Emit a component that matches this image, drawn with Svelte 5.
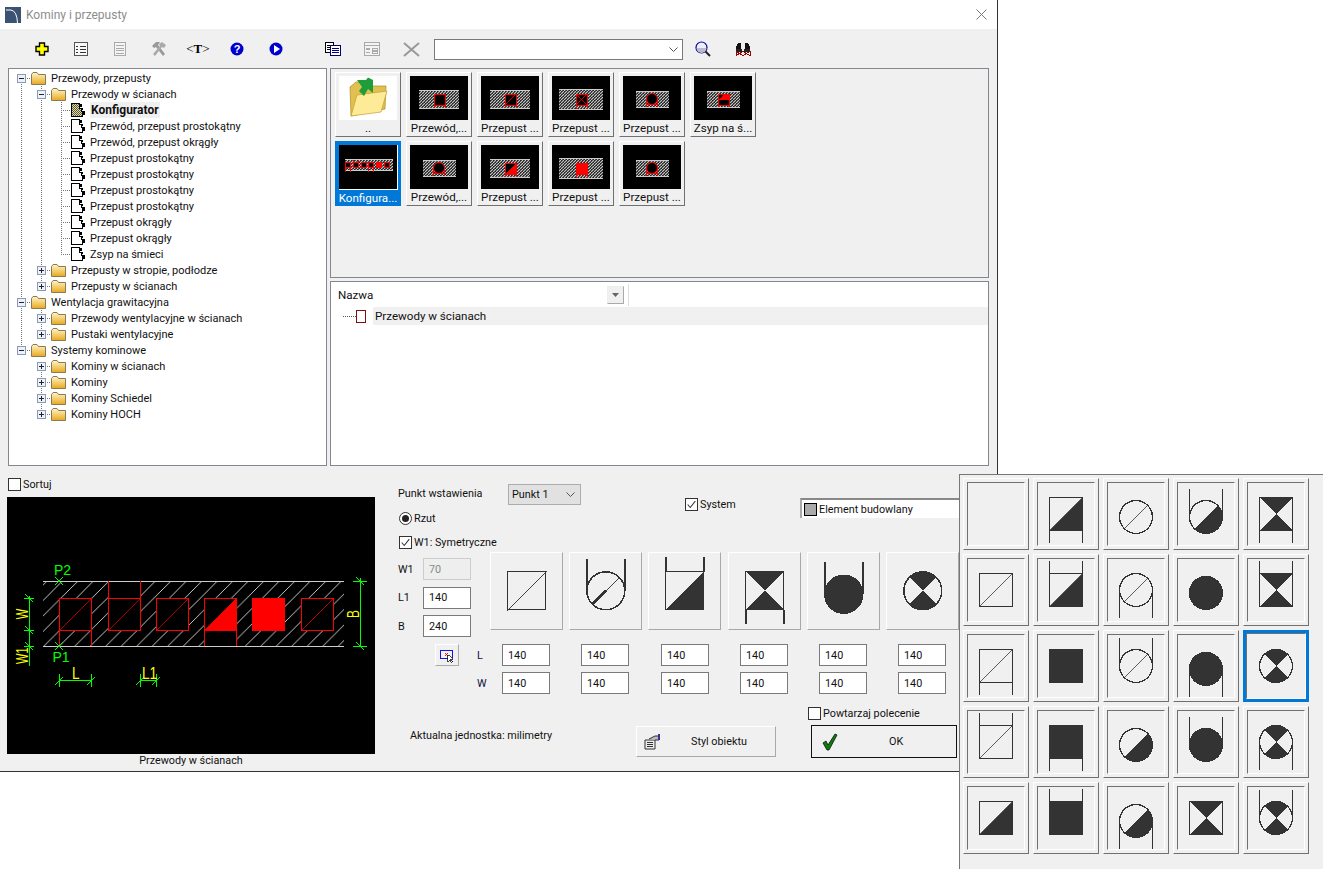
<script>
  const D = 'd', U = 'u', N = '';
  const tree = [
    { t: 'Przewody, przepusty', c: [{ u: 0, d: 1, r: 1, e: '-' }], i: 'f' },
    { t: 'Przewody w ścianach', c: [{ u: 1, d: 1 }, { u: 1, d: 1, r: 1, e: '-' }], i: 'f' },
    { t: 'Konfigurator', c: [{ u: 1, d: 1 }, { u: 1, d: 1 }, { u: 1, d: 1, r: 1 }], i: 'k', b: 1 },
    ...['Przewód, przepust prostokątny', 'Przewód, przepust okrągły', 'Przepust prostokątny', 'Przepust prostokątny', 'Przepust prostokątny', 'Przepust prostokątny', 'Przepust okrągły', 'Przepust okrągły'].map((t) => ({
      t, c: [{ u: 1, d: 1 }, { u: 1, d: 1 }, { u: 1, d: 1, r: 1 }], i: 'l'
    })),
    { t: 'Zsyp na śmieci', c: [{ u: 1, d: 1 }, { u: 1, d: 1 }, { u: 1, d: 0, r: 1 }], i: 'l' },
    { t: 'Przepusty w stropie, podłodze', c: [{ u: 1, d: 1 }, { u: 1, d: 1, r: 1, e: '+' }], i: 'f' },
    { t: 'Przepusty w ścianach', c: [{ u: 1, d: 1 }, { u: 1, d: 0, r: 1, e: '+' }], i: 'f' },
    { t: 'Wentylacja grawitacyjna', c: [{ u: 1, d: 1, r: 1, e: '-' }], i: 'f' },
    { t: 'Przewody wentylacyjne w ścianach', c: [{ u: 1, d: 1 }, { u: 1, d: 1, r: 1, e: '+' }], i: 'f' },
    { t: 'Pustaki wentylacyjne', c: [{ u: 1, d: 1 }, { u: 1, d: 0, r: 1, e: '+' }], i: 'f' },
    { t: 'Systemy kominowe', c: [{ u: 1, d: 0, r: 1, e: '-' }], i: 'f' },
    { t: 'Kominy w ścianach', c: [{}, { u: 0, d: 1, r: 1, e: '+' }], i: 'f' },
    { t: 'Kominy', c: [{}, { u: 1, d: 1, r: 1, e: '+' }], i: 'f' },
    { t: 'Kominy Schiedel', c: [{}, { u: 1, d: 1, r: 1, e: '+' }], i: 'f' },
    { t: 'Kominy HOCH', c: [{}, { u: 1, d: 0, r: 1, e: '+' }], i: 'f' }
  ];

  const wideH = { hx: 8.7, hy: 14.3, hw: 40, hh: 18 };
  const bigH = { hx: 6.7, hy: 13.3, hw: 44, hh: 20 };
  const smallH = { hx: 12.7, hy: 15, hw: 33, hh: 16 };
  const thumbs = [
    { label: '..', folder: true },
    { label: 'Przewód,...', ...wideH, k: 'sq' },
    { label: 'Przepust ...', ...wideH, k: 'tri' },
    { label: 'Przepust ...', ...bigH, k: 'x' },
    { label: 'Przepust ...', ...smallH, k: 'circ' },
    { label: 'Zsyp na ś...', ...smallH, k: 'half' },
    { label: 'Konfigura...', hx: 5.7, hy: 14.7, hw: 48, hh: 11, k: 'multi', sel: true },
    { label: 'Przewód,...', ...smallH, k: 'circ' },
    { label: 'Przepust ...', ...wideH, k: 'tri2' },
    { label: 'Przepust ...', ...bigH, k: 'fill' },
    { label: 'Przepust ...', ...smallH, k: 'circ' }
  ];

  const S = 's', C = 'c';
  const popup = [
    null, [S, 'half', D, 0], [C, 'diag', N, 3], [C, 'half', U, 3], [S, 'hour', D, 0],
    [S, 'diag', N, 0], [S, 'half', U, 0], [C, 'diag', D, 0], [C, 'full', N, 3], [S, 'hour', U, 0],
    [S, 'diag', D, 0], [S, 'full', N, 0], [C, 'diag', U, 0], [C, 'full', D, 3], [C, 'x', N, 0],
    [S, 'diag', U, 0], [S, 'full', D, 0], [C, 'half', N, 3], [C, 'full', U, 3], [C, 'x', D, 0],
    [S, 'half', N, 0], [S, 'full', U, 0], [C, 'half', D, 3], [S, 'hour', N, 0], [C, 'x', U, 0]
  ];
  const mainSyms = [
    [S, 'diag', N, 0], [C, 'diagB', U, 0], [S, 'half', U, 0], [S, 'hour', D, 0], [C, 'full', U, 3], [C, 'x', N, 0]
  ];
  const values = [140, 140, 140, 140, 140, 140];
  const redSquares = [52.3, 101.3, 149.3, 197.3, 245.3, 294.3];
</script>

{#snippet symbol(s)}
  <svg class="sym" viewBox="-32 -32 64 64" shape-rendering="crispEdges">
    {#if s}
      <g transform={`translate(0 ${s[3]})`} fill="#333" stroke="#333">
        {#if s[0] === 's'}
          {#if s[1] === 'half'}<polygon points="17,-17 17,17 -17,17" stroke="none" />{/if}
          {#if s[1] === 'hour'}<polygon points="-17,-17 17,-17 0,0" stroke="none" /><polygon points="-17,17 17,17 0,0" stroke="none" />{/if}
          {#if s[1] === 'full'}<rect x="-17" y="-17" width="34" height="34" stroke="none" />{/if}
          {#if s[1] === 'diag' || s[1] === 'half'}<line x1="-17" y1="17" x2="17" y2="-17" stroke-width="0.8" />{/if}
          <rect class="o" x="-16.5" y="-16.5" width="33" height="33" fill="none" />
          {#if s[2] === 'd'}<path class="leg" d="M-16.5 17V29M16.5 17V29" fill="none" />{/if}
          {#if s[2] === 'u'}<path class="leg" d="M-16.5 -17V-29M16.5 -17V-29" fill="none" />{/if}
        {:else}
          {#if s[1] === 'full'}<circle r="17" stroke="none" />{/if}
          {#if s[1] === 'half'}<path d="M12 -12A17 17 0 0 1 -12 12Z" stroke="none" />{/if}
          {#if s[1] === 'x'}<path d="M-12 -12A17 17 0 0 1 12 -12L0 0ZM12 12A17 17 0 0 1 -12 12L0 0Z" stroke="none" />{/if}
          {#if s[1] === 'diag'}<line x1="-12" y1="12" x2="12" y2="-12" stroke-width="0.8" />{/if}
          {#if s[1] === 'diagB'}<line x1="-12" y1="12" x2="12" y2="-12" stroke-width="0.8" /><line x1="-12" y1="12" x2="0" y2="0" stroke-width="2.2" />{/if}
          <circle r="16.5" fill="none" stroke-width="1.3" />
          {#if s[2] === 'd'}<path class="leg" d="M-16.5 0V28M16.5 0V28" fill="none" />{/if}
          {#if s[2] === 'u'}<path class="leg" d="M-16.5 0V-28M16.5 0V-28" fill="none" />{/if}
        {/if}
      </g>
    {/if}
  </svg>
{/snippet}

{#snippet thumb(t)}
  {#if t.folder}
    <svg class="timg" viewBox="0 0 58 44">
      <rect width="58" height="44" fill="#fff" />
      <path d="M11 11L17 6H30L33 10H47L46 33L12 40Z" fill="#e0c050" stroke="#b08a20" stroke-width="0.7" />
      <path d="M12 40L18 19L48 15L42 36Z" fill="#fdeb98" stroke="#c79d2b" stroke-width="0.7" />
      <path d="M18 4H27L29 1.500L34 4V17L29 13L25 20L20 15L23 11Z" fill="#1f9d3a" />
    </svg>
  {:else}
    <svg class="timg" viewBox="0 0 58 44" shape-rendering="crispEdges">
      <rect width="58" height="44" fill="#000" />
      <rect x={t.hx} y={t.hy} width={t.hw} height={t.hh} fill="url(#tinyhatch)" />
      <path d={`M${t.hx} ${t.hy}h${t.hw}M${t.hx} ${t.hy + t.hh}h${t.hw}`} stroke="#ccc" stroke-width="1" />
      <g fill="#000" stroke="#f00" stroke-width="1">
        {#if t.k === 'multi'}
          {#each [6, 14, 22, 29, 37, 45] as x, i}
            <rect {x} y="17.5" width="5" height="5" fill={i === 4 ? '#f00' : '#000'} />
          {/each}
          <path d="M14 14.500V22M19 14.500V22M29 22V27M34 22V27M6 22V27M11 22V27" fill="none" />
        {:else if t.k === 'circ'}
          <circle cx="29" cy="23" r="5.5" fill="#000" shape-rendering="geometricPrecision" />
          <path d="M23.500 23V31M34.500 23V31M23.500 28H34.500" fill="none" />
        {:else}
          <rect x="24" y="18" width="11" height="11" fill={t.k === 'fill' ? '#f00' : '#000'} />
          {#if t.k === 'tri'}<path d="M24 29L35 18" fill="none" stroke-width="0.8" />{/if}
          {#if t.k === 'tri2'}<polygon points="35,18 35,29 24,29" fill="#f00" stroke="none" />{/if}
          {#if t.k === 'half'}<polygon points="24,24 30,18 35,18 35,24" fill="#f00" stroke="none" />{/if}
          {#if t.k === 'x'}<path d="M24 18L35 29M35 18L24 29" fill="none" stroke-width="0.8" />{/if}
          <path d={`M24 29V${t.hy + t.hh}M35 29V${t.hy + t.hh}`} fill="none" />
        {/if}
      </g>
    </svg>
  {/if}
{/snippet}

{#snippet check(on)}
  <span class="cb">
    {#if on}
      <svg viewBox="0 0 13 13"><path d="M2 6.500L5 10L11 2.500" fill="none" stroke="#333" stroke-width="1.2" /></svg>
    {/if}
  </span>
{/snippet}

<div class="page">
  <svg width="0" height="0" class="defs">
    <defs>
      <pattern id="tinyhatch" width="3" height="3" patternUnits="userSpaceOnUse">
        <rect width="3" height="3" fill="#222" />
        <path d="M0 3L3 0" stroke="#ccc" stroke-width="1.1" />
      </pattern>
      <pattern id="cadhatch" width="15.5" height="15.5" patternUnits="userSpaceOnUse">
        <path d="M0 15.5L15.5 0" stroke="#ddd" stroke-width="0.9" fill="none" />
      </pattern>
      <pattern id="checker" width="2" height="2" patternUnits="userSpaceOnUse">
        <rect width="2" height="2" fill="#e8dc8c" />
        <rect width="1" height="1" fill="#555" />
        <rect x="1" y="1" width="1" height="1" fill="#555" />
      </pattern>
      <linearGradient id="fold" x1="0" y1="0" x2="0" y2="1">
        <stop offset="0" stop-color="#fff6c8" />
        <stop offset="1" stop-color="#e8a820" />
      </linearGradient>
    </defs>
  </svg>

  <div class="window">
    <header class="title">
      <svg class="appicon" viewBox="0 0 16 16"><rect width="16" height="16" fill="#3b5272" /><path d="M1 3H6Q12 4 12.500 16" fill="none" stroke="#fff" stroke-width="1" /></svg>
      <span>Kominy i przepusty</span>
      <svg class="close" viewBox="0 0 11 11"><path d="M0.500 0.500L10.500 10.500M10.500 0.500L0.500 10.500" stroke="#777" stroke-width="1" fill="none" /></svg>
    </header>

    <div class="toolbar">
      <div class="tb">
        <svg viewBox="0 0 14 14" class="ti"><path d="M4.500 1H9.500V4.500H13V9.500H9.500V13H4.500V9.500H1V4.500H4.500Z" fill="#ff0" stroke="#000" stroke-width="1.4" /></svg>
      </div>
      <div class="tb">
        <svg viewBox="0 0 14 14" class="ti" shape-rendering="crispEdges"><rect x="0.500" y="0.500" width="13" height="13" fill="#f8f8f8" stroke="#555" /><path d="M2 4H4M6 4H12M2 7H4M6 7H12M2 10H4M6 10H12" stroke="#333" /></svg>
      </div>
      <div class="tb">
        <svg viewBox="0 0 14 14" class="ti" shape-rendering="crispEdges"><rect x="1.500" y="0.500" width="11" height="13" fill="#f4f4f4" stroke="#aaa" /><path d="M3 3.500H11M3 6H11M3 8.500H11M3 11H11" stroke="#aaa" /></svg>
      </div>
      <div class="tb">
        <svg viewBox="0 0 16 16" class="ti wide"><path d="M1 5L5 1H9L7 4L14 13L12 15L5 6L3 7Z" fill="#999" /><path d="M2 13L9 5L8 3L11 1L15 4L13 7L11 6L4 15Z" fill="#aaa" /></svg>
      </div>
      <div class="tb"><span class="ttag">&lt;<b>T</b>&gt;</span></div>
      <div class="tb">
        <svg viewBox="0 0 14 14" class="ti"><circle cx="7" cy="7" r="6.500" fill="#00c" /><text x="7" y="11" text-anchor="middle" class="qm">?</text></svg>
      </div>
      <div class="tb">
        <svg viewBox="0 0 14 14" class="ti"><circle cx="7" cy="7" r="6.500" fill="#00c" /><path d="M5 3L11 7L5 11Z" fill="#fff" /></svg>
      </div>
      <div class="tb t8">
        <svg viewBox="0 0 16 14" class="ti wide" shape-rendering="crispEdges"><rect x="0.500" y="0.500" width="8" height="10" fill="#fff" stroke="#000" /><path d="M2 3H7M2 5H7M2 7H7" stroke="#000" /><rect x="5.500" y="3.500" width="10" height="10" fill="#fff" stroke="#007" /><path d="M7 6H14M7 8H14M7 10H14" stroke="#007" /></svg>
      </div>
      <div class="tb">
        <svg viewBox="0 0 15 14" class="ti wide" shape-rendering="crispEdges"><rect x="0.500" y="0.500" width="14" height="13" fill="#f4f4f4" stroke="#aaa" /><path d="M1 4H14M2 7H6M2 10H6M8 6.500H13V8.500H8ZM8 9.500H13V11.500H8Z" stroke="#aaa" fill="none" /></svg>
      </div>
      <div class="tb">
        <svg viewBox="0 0 17 15" class="ti wider"><path d="M1 1L16 14M16 1L1 14" stroke="#999" stroke-width="2" /></svg>
      </div>
      <div class="combo">
        <svg viewBox="0 0 9 5" class="chev"><path d="M0.500 0.500L4.500 4.500L8.500 0.500" fill="none" stroke="#555" /></svg>
      </div>
      <div class="tb t11">
        <svg viewBox="0 0 16 16" class="ti wide"><circle cx="6.500" cy="6.500" r="5.500" fill="#eef" stroke="#009" stroke-width="1.2" /><path d="M1.500 7A5 5 0 0 0 11.500 7Z" fill="#bbc" /><path d="M10.500 10.500L15 15" stroke="#222" stroke-width="2" /></svg>
      </div>
      <div class="tb t12">
        <svg viewBox="0 0 16 15" class="ti wide" shape-rendering="crispEdges"><path d="M3 1H6V7H1V6ZM10 1H13L15 6V7H10Z" fill="#111" /><path d="M1 7H7V9H9V7H15V10H9V9H7V10H1Z" fill="#222" /><path d="M1 14L8 10L15 14V10L8 14L1 10Z" fill="none" stroke="#900" /></svg>
      </div>
    </div>

    <div class="mainrow">
      <div class="tree">
        {#each tree as row}
          <div class="trow">
            {#each row.c as c}
              <svg class="cell" viewBox="0 0 20 16" shape-rendering="crispEdges">
                <g stroke="#777" stroke-dasharray="1 1" fill="none">
                  {#if c.u}<path d="M10 0V8" />{/if}
                  {#if c.d}<path d="M10 8V16" />{/if}
                  {#if c.r}<path d="M10 8.500H20" />{/if}
                </g>
                {#if c.e}
                  <rect x="6.500" y="4.500" width="8" height="8" fill="#eef1f6" stroke="#8a9ab5" />
                  <path d={c.e === '-' ? 'M8 8.500H13' : 'M8 8.500H13M10.500 6V11'} stroke="#223" />
                {/if}
              </svg>
            {/each}
            {#if row.i === 'f'}
              <svg class="ticon" viewBox="0 0 15 13"><path d="M0.500 2.500L2 0.500H6L7.500 2.500H14.500V12.500H0.500Z" fill="url(#fold)" stroke="#8a7a50" /></svg>
            {:else}
              <svg class="ticon leaf" viewBox="0 0 14 14" shape-rendering="crispEdges">
                <path d="M0.500 0.500H8.500V5H10V8H11.500V13.500H0.500Z" fill={row.i === 'k' ? 'url(#checker)' : '#fff'} stroke="#000" />
                <path d="M9 1H11V4H9ZM10 5H12V7H10ZM12 8H14V12H12Z" fill="#000" />
              </svg>
            {/if}
            <span class="tlabel" class:bold={row.b}>{row.t}</span>
          </div>
        {/each}
      </div>

      <div class="rightcol">
        <div class="thumbs">
          {#each thumbs as t}
            <div class="thumb" class:sel={t.sel}>
              {@render thumb(t)}
              <span class="tcap">{t.label}</span>
            </div>
          {/each}
        </div>
        <div class="list">
          <div class="lhead">
            <span class="lname">Nazwa</span>
            <span class="ldrop"><svg viewBox="0 0 7 4"><path d="M0 0H7L3.500 4Z" fill="#666" /></svg></span>
            <span class="lsep"></span>
          </div>
          <div class="lrow">
            <span class="ldots"></span>
            <span class="lmark"></span>
            <span class="lsel">Przewody w ścianach</span>
          </div>
        </div>
      </div>
    </div>

    <div class="bottom">
      <div class="bleft">
        <label class="chk sort">{@render check(false)}<span>Sortuj</span></label>
        <svg class="cad" viewBox="0 0 368 257" shape-rendering="crispEdges">
          <rect width="368" height="257" fill="#000" />
          <rect x="36" y="84.300" width="301" height="65" fill="url(#cadhatch)" />
          <rect x="101.300" y="84.300" width="32" height="17" fill="#000" />
          <rect x="197.300" y="133.300" width="32" height="16" fill="#000" />
          <path d="M36 84.300H337M36 149.300H337" stroke="#ccc" stroke-width="1" />
          {#each redSquares as x, i}
            <rect {x} y="101.300" width="32" height="32" fill={i === 4 ? '#f00' : '#000'} stroke="#f00" stroke-width="1" />
            {#if i !== 4}<line x1={x} y1="133.300" x2={x + 32} y2="101.300" stroke="#f00" stroke-width="0.7" />{/if}
          {/each}
          <polygon points="229.300,101.300 229.300,133.300 197.300,133.300" fill="#f00" />
          <path d="M52.300 133V149.300M84.300 133V149.300M101.300 84.300V101.300M133.300 84.300V101.300M197.300 133V149.300M229.300 133V149.300" stroke="#f00" stroke-width="1" fill="none" />
          <g stroke="#0f0" stroke-width="1" fill="none">
            <path d="M22.300 99V168.700" />
            <path d="M17.300 101.300H27.300M17.300 133.300H27.300M17.300 149.300H27.300M18 97.300L26 105.300M18 129.300L26 137.300M18 145.300L26 153.300" />
            <path d="M353 81V150" />
            <path d="M346 84.300H360M346 149.300H360M349 80.300L357 88.300M349 145.300L357 153.300" />
            <path d="M52.300 183.700H84.300M52.300 177V190M84.300 177V190M48.300 187.700L56.300 179.700M80.300 187.700L88.300 179.700" />
            <path d="M133.300 183.700H149.300M133.300 177V190M149.300 177V190M129.300 187.700L137.300 179.700M145.300 187.700L153.300 179.700" />
            <path d="M48 80.300L56 88.300M56 80.300L48 88.300M48 145.300L56 153.300M56 145.300L48 153.300" />
          </g>
          <text x="47" y="78" class="cadt green">P2</text>
          <text x="45.500" y="165" class="cadt green">P1</text>
          <text transform="translate(65 182) scale(0.8 1)" class="cadt tall yellow">L</text>
          <text transform="translate(135 182) scale(0.8 1)" class="cadt tall yellow">L1</text>
          <text transform="translate(21.300 117) rotate(-90) scale(0.65 1)" text-anchor="middle" class="cadt tall yellow">W</text>
          <text transform="translate(21.300 158.700) rotate(-90) scale(0.65 1)" text-anchor="middle" class="cadt tall yellow">W1</text>
          <text transform="translate(352 117) rotate(-90) scale(0.7 1)" text-anchor="middle" class="cadt tall yellow">B</text>
        </svg>
        <div class="caption">Przewody w ścianach</div>
      </div>

      <div class="form">
        <div class="frow a">
          <span class="pw">Punkt wstawienia</span>
          <div class="sel1"><span>Punkt 1</span><svg viewBox="0 0 9 5" class="chev"><path d="M0.500 0.500L4.500 4.500L8.500 0.500" fill="none" stroke="#555" /></svg></div>
          <label class="chk sys">{@render check(true)}<span>System</span></label>
          <div class="elem"><span class="swatch"></span><span>Element budowlany</span></div>
        </div>
        <div class="frow b">
          <span class="radio"><span class="dot"></span></span><span>Rzut</span>
        </div>
        <label class="chk c">{@render check(true)}<span>W1: Symetryczne</span></label>
        <div class="frow d">
          <div class="params">
            <div class="prow"><span class="plabel">W1</span><input class="inp dis" value="70" readonly /></div>
            <div class="prow"><span class="plabel">L1</span><input class="inp" value="140" readonly /></div>
            <div class="prow"><span class="plabel">B</span><input class="inp" value="240" readonly /></div>
          </div>
          <div class="symrow">
            {#each mainSyms as s}
              <div class="mtile">{@render symbol(s)}</div>
            {/each}
          </div>
        </div>
        <div class="frow e">
          <div class="pick">
            <svg viewBox="0 0 24 21" shape-rendering="crispEdges"><rect x="4.500" y="5.500" width="13" height="9" fill="none" stroke="#00d" /><path d="M9 8L13 12M13 8L9 12" stroke="#d00" /><path d="M13 10L13 18L15 16L17 19L18 18L16 15L19 15Z" fill="#fff" stroke="#000" stroke-width="0.8" /></svg>
          </div>
          <div class="dims">
            <div class="drow">
              <span class="dl">L</span>
              {#each values as v}<input class="inp" value={v} readonly />{/each}
            </div>
            <div class="drow">
              <span class="dl">W</span>
              {#each values as v}<input class="inp" value={v} readonly />{/each}
            </div>
          </div>
        </div>
        <label class="chk rep">{@render check(false)}<span>Powtarzaj polecenie</span></label>
        <div class="frow g">
          <span class="unit">Aktualna jednostka: milimetry</span>
          <button class="styl">
            <svg viewBox="0 0 16 16" class="bico"><path d="M1 6H11V15H1Z" fill="#eee" stroke="#333" /><path d="M3 8.500H9M3 10.500H9M3 12.500H9" stroke="#333" /><path d="M5 5L11 2L15 2V6H11" fill="#bbb" stroke="#333" /><rect x="14" y="0" width="2" height="6" fill="#339" /></svg>
            <span>Styl obiektu</span>
          </button>
          <button class="ok">
            <svg viewBox="0 0 16 18" class="okico"><path d="M1 10L4 8L6 12L13 1L15 2L7 17H5Z" fill="#0a7d0a" stroke="#111" stroke-width="0.8" /></svg>
            <span>OK</span>
          </button>
        </div>
      </div>
    </div>
  </div>

  <div class="popup">
    {#each popup as s, i}
      <div class="ptile" class:psel={i === 14}>
        <div class="pin">{@render symbol(s)}</div>
      </div>
    {/each}
  </div>
</div>

<style>
  :global(body) {
    margin: 0;
    background: #fff;
    overflow: hidden;
  }
  .page {
    position: relative;
    width: 1323px;
    height: 869px;
    font-family: Roboto, sans-serif;
    font-size: 11px;
    color: #111;
    overflow: hidden;
  }
  .defs { position: absolute; }
  .window {
    width: 997px;
    height: 771px;
    display: flex;
    flex-direction: column;
    background: #f0f0f0;
    border-right: 1px solid #333;
    border-bottom: 1px solid #333;
  }
  .title {
    height: 29px;
    background: #fff;
    display: flex;
    align-items: center;
    padding-left: 5px;
    padding-right: 10px;
    color: #8d8d8d;
    font-size: 12px;
    flex: none;
  }
  .appicon { width: 16px; height: 16px; margin-right: 5px; }
  .close { width: 11px; height: 11px; margin-left: auto; }
  .toolbar {
    height: 39px;
    display: flex;
    align-items: center;
    padding-left: 22px;
    flex: none;
    box-sizing: border-box;
    padding-top: 1px;
  }
  .tb {
    width: 39.1px;
    display: flex;
    justify-content: center;
    align-items: center;
    flex: none;
  }
  .t8 { margin-left: 18px; }
  .ti { width: 14px; height: 14px; }
  .wide { width: 16px; height: 16px; }
  .wider { width: 17px; height: 15px; }
  .ttag { font-family: "Liberation Serif", serif; font-size: 13px; color: #000; }
  .qm { font: bold 11px "Liberation Sans", sans-serif; fill: #fff; }
  .combo {
    width: 249px;
    height: 21px;
    margin-left: 3px;
    box-sizing: border-box;
    background: #fff;
    border: 1px solid #7a7a7a;
    display: flex;
    align-items: center;
    justify-content: flex-end;
    padding-right: 4px;
    flex: none;
  }
  .chev { width: 9px; height: 5px; }
  .t11 { margin-left: 1px; }
  .mainrow {
    display: flex;
    height: 398px;
    padding-left: 8px;
    flex: none;
  }
  .tree {
    width: 319px;
    height: 398px;
    box-sizing: border-box;
    background: #fff;
    border: 1px solid #828790;
    padding: 1px 0 0 2px;
    flex: none;
  }
  .trow {
    height: 16px;
    display: flex;
    align-items: center;
    white-space: nowrap;
  }
  .cell { width: 20px; height: 16px; flex: none; }
  .ticon { width: 15px; height: 13px; flex: none; margin-right: 5px; }
  .ticon.leaf { width: 14px; height: 14px; margin-right: 5px; }
  .tlabel { line-height: 15px; height: 15px; padding-top: 1px; }
  .bold {
    font-weight: 700;
    font-size: 12px;
    background: #f0f0f0;
    padding: 1px 1px 0;
  }
  .rightcol {
    margin-left: 3px;
    width: 659px;
    display: flex;
    flex-direction: column;
    gap: 3px;
  }
  .thumbs {
    height: 210px;
    box-sizing: border-box;
    border: 1px solid #828790;
    padding: 3px 0 0 4px;
    display: grid;
    grid-template-columns: repeat(9, 66px);
    grid-auto-rows: 65px;
    column-gap: 5px;
    row-gap: 4px;
    font-size: 11.6px;
  }
  .thumbs .thumb:nth-child(7) { grid-column: 1; }
  .thumb {
    box-sizing: border-box;
    border: 1px solid;
    border-color: #fff #707070 #707070 #fff;
    background: #f0f0f0;
    display: flex;
    flex-direction: column;
    align-items: center;
    padding-top: 3px;
  }
  .thumb.sel {
    background: #0078d7;
    color: #fff;
    border-color: #0078d7;
  }
  .thumb.sel .timg { border-right: 1px solid #fff; border-bottom: 1px solid #fff; }
  .timg { width: 58px; height: 44px; flex: none; display: block; }
  .tcap { line-height: 16px; white-space: nowrap; }
  .list {
    height: 185px;
    box-sizing: border-box;
    background: #fff;
    border: 1px solid #828790;
    display: flex;
    flex-direction: column;
    font-size: 11.6px;
  }
  .lhead {
    height: 25px;
    display: flex;
    align-items: center;
    padding-left: 7px;
    box-sizing: border-box;
  }
  .lname { width: 269px; }
  .ldrop {
    width: 17px;
    height: 18px;
    box-sizing: border-box;
    border: 1px solid;
    border-color: #eee #aaa #aaa #eee;
    background: #f0f0f0;
    display: flex;
    align-items: center;
    justify-content: center;
  }
  .ldrop svg { width: 7px; height: 4px; }
  .lsep { width: 1px; height: 22px; background: #ddd; margin-left: 4px; }
  .lrow {
    display: flex;
    align-items: center;
    height: 18px;
    padding-left: 12px;
  }
  .ldots { width: 13px; border-top: 1px dotted #555; }
  .lmark {
    width: 10px;
    height: 13px;
    box-sizing: border-box;
    border: 1px solid #7a1010;
    margin-right: 7px;
    background: #fff;
  }
  .lsel {
    flex: 1;
    background: #f0f0f0;
    line-height: 18px;
    padding-left: 2px;
  }
  .bottom {
    display: flex;
    flex: 1;
    min-height: 0;
    font-size: 10.8px;
  }
  .bleft {
    width: 368px;
    margin-left: 7px;
    padding-top: 11px;
    flex: none;
  }
  .chk {
    display: flex;
    align-items: center;
    gap: 2px;
    height: 14px;
    white-space: nowrap;
  }
  .cb {
    width: 13px;
    height: 13px;
    box-sizing: border-box;
    border: 1px solid #333;
    background: #fff;
    flex: none;
    display: block;
  }
  .cb svg { display: block; width: 11px; height: 11px; }
  .sort { margin-left: 1px; margin-bottom: 6px; }
  .cad { display: block; width: 368px; height: 257px; }
  .cadt { font: 14px "Liberation Sans", sans-serif; }
  .cadt.tall { font-size: 17px; }
  .green { fill: #0f0; }
  .yellow { fill: #ff0; }
  .caption { text-align: center; line-height: 14px; }
  .form {
    margin-left: 23px;
    padding-top: 18px;
    width: 560px;
    flex: none;
  }
  .frow { display: flex; }
  .a { height: 27px; align-items: flex-start; }
  .pw { width: 110px; line-height: 20px; flex: none; white-space: nowrap; }
  .sel1 {
    width: 73px;
    height: 21px;
    box-sizing: border-box;
    background: #e1e1e1;
    border: 1px solid #adadad;
    display: flex;
    align-items: center;
    justify-content: space-between;
    padding: 0 5px 0 3px;
    flex: none;
  }
  .sys { margin-left: 104px; margin-top: 13px; width: 115px; flex: none; }
  .elem {
    width: 200px;
    height: 20px;
    margin-top: 14px;
    box-sizing: border-box;
    background: #fff;
    border-top: 2px solid #888;
    border-left: 2px solid #aaa;
    display: flex;
    align-items: center;
    padding-left: 2px;
    gap: 2px;
    flex: none;
  }
  .swatch {
    width: 13px;
    height: 13px;
    box-sizing: border-box;
    border: 1px solid #000;
    background: #aaa;
  }
  .b { height: 14px; align-items: center; gap: 2px; padding-left: 1px; }
  .radio {
    width: 13px;
    height: 13px;
    box-sizing: border-box;
    border: 1px solid #333;
    border-radius: 50%;
    display: flex;
    align-items: center;
    justify-content: center;
    background: #fff;
  }
  .dot { width: 7px; height: 7px; border-radius: 50%; background: #222; }
  .c { margin-top: 10px; margin-left: 1px; }
  .d { height: 78px; margin-top: 3px; }
  .params { width: 92px; padding-top: 6px; flex: none; }
  .prow { display: flex; align-items: center; height: 22px; margin-bottom: 6.500px; }
  .plabel { width: 25px; }
  .inp {
    width: 48px;
    height: 22px;
    box-sizing: border-box;
    border: 1px solid #7a7a7a;
    background: #fff;
    padding: 0 0 0 5px;
    font: inherit;
    color: #111;
    outline: none;
    flex: none;
    margin: 0;
  }
  .inp.dis { background: #eee; border-color: #ccc; color: #888; }
  .symrow { display: flex; gap: 6px; }
  .symrow .mtile:nth-child(4) { margin-left: 1px; }
  .drow .inp:nth-of-type(3) { margin-left: 1px; }
  .mtile {
    width: 73px;
    height: 78px;
    box-sizing: border-box;
    border: 1px solid;
    border-color: #fff #a8a8a8 #a8a8a8 #fff;
    display: flex;
    align-items: center;
    justify-content: center;
    flex: none;
  }
  .sym { width: 64px; height: 64px; flex: none; display: block; overflow: visible; }
  .sym .o { stroke-width: 1.6; }
  .sym .leg { stroke-width: 1.4; }
  .mtile .sym { width: 73.6px; height: 73.6px; }
  .mtile .sym .o { stroke-width: 0.9; }
  .mtile .sym .leg { stroke-width: 1.4; }
  .e { margin-top: 14px; }
  .pick {
    width: 24px;
    height: 22px;
    margin-left: 37px;
    margin-right: 18px;
    box-sizing: border-box;
    border: 1px solid;
    border-color: #fff #aaa #aaa #fff;
    flex: none;
  }
  .pick svg { display: block; width: 22px; height: 20px; }
  .dims { display: flex; flex-direction: column; gap: 6px; }
  .drow { display: flex; align-items: center; gap: 31px; }
  .dl { width: 25px; margin-right: -31px; color: #114; }
  .rep { margin-top: 12px; margin-left: 410px; }
  .g { margin-top: 5px; align-items: flex-start; }
  .unit { width: 226px; margin-left: 12px; line-height: 22px; flex: none; }
  button {
    font: inherit;
    color: #111;
    background: #f0f0f0;
    box-sizing: border-box;
    display: flex;
    align-items: center;
    padding: 0;
    flex: none;
  }
  .styl {
    width: 140px;
    height: 31px;
    margin-top: 1px;
    border: 1px solid;
    border-color: #fff #a8a8a8 #a8a8a8 #fff;
    padding-left: 7px;
  }
  .bico { width: 16px; height: 16px; margin-right: 31px; }
  .ok {
    width: 146px;
    height: 33px;
    margin-left: 35px;
    border: 1px solid #111;
    padding-left: 10px;
  }
  .okico { width: 16px; height: 18px; margin-right: 51px; }
  .popup {
    position: absolute;
    left: 959px;
    top: 474px;
    width: 364px;
    height: 395px;
    box-sizing: border-box;
    background: #f0f0f0;
    border-left: 1px solid #777;
    border-top: 1px solid #777;
    padding: 3px 0 0 3px;
    display: grid;
    grid-template-columns: repeat(5, 66px);
    grid-auto-rows: 72px;
    gap: 4px;
  }
  .ptile {
    box-sizing: border-box;
    border: 1px solid;
    border-color: #fff #707070 #707070 #fff;
    padding: 3px;
    display: flex;
  }
  .ptile.psel {
    border: 3px solid #0078d7;
    padding: 0;
  }
  .pin {
    flex: 1;
    box-sizing: border-box;
    border: 1px solid;
    border-color: #707070 #fff #fff #707070;
    display: flex;
    align-items: center;
    justify-content: center;
    min-width: 0;
  }
</style>
